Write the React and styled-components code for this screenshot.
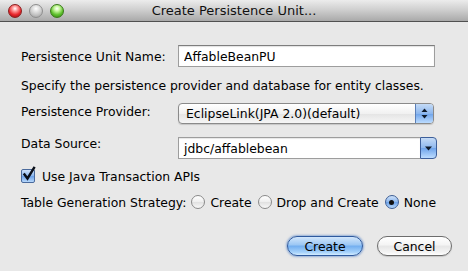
import React, { useState } from 'react'
import styled, { createGlobalStyle } from 'styled-components'

const GlobalStyle = createGlobalStyle`
    html, body {
        margin: 0;
        padding: 0;
        background: #e8e8e8;
    }
    body {
        font-family: "DejaVu Sans", "Liberation Sans", sans-serif;
        font-size: 12.4px;
        color: #000;
    }
`

const Window = styled.div`
    width: 468px;
    height: 271px;
    background: #e8e8e8;
    display: flex;
    flex-direction: column;
    overflow: hidden;
`

const TitleBar = styled.div`
    height: 21px;
    flex-shrink: 0;
    display: flex;
    align-items: center;
    position: relative;
    background: linear-gradient(#ececec, #d0d0d0 45%, #a9a9a9);
    border-bottom: 1px solid #515151;
`

const Lights = styled.div`
    display: flex;
    gap: 7px;
    padding-left: 8px;
`

const Light = styled.span`
    width: 14px;
    height: 14px;
    border-radius: 50%;
    box-sizing: border-box;
    border: 1px solid ${p => p.$edge};
    background: radial-gradient(circle at 50% 30%, #fff 0, ${p => p.$light} 25%, ${p => p.$color} 60%, ${p => p.$dark} 100%);
`

const Title = styled.div`
    position: absolute;
    left: 0;
    right: 0;
    text-align: center;
    font-size: 13px;
    color: #111;
    pointer-events: none;
`

const Body = styled.div`
    padding: 23px 0 0 21px;
    display: flex;
    flex-direction: column;
`

const FieldRow = styled.div`
    display: flex;
    align-items: center;
    height: ${p => p.$h || 22}px;
    margin-top: ${p => p.$mt || 0}px;
`

const Label = styled.div`
    width: 157px;
    flex-shrink: 0;
    position: relative;
    top: ${p => p.$shift || 0}px;
`

const TextInput = styled.input`
    box-sizing: border-box;
    width: 257px;
    height: 22px;
    border: 1px solid #9d9d9d;
    border-top-color: #7d7d7d;
    background: #fff;
    font: inherit;
    padding: 0 0 0 5px;
    outline: none;
    box-shadow: inset 0 1px 1px rgba(0,0,0,0.12);
`

const Note = styled.div`
    margin-top: 11px;
    height: 16px;
    line-height: 16px;
`

const PopUp = styled.div`
    box-sizing: border-box;
    width: 256px;
    height: 21px;
    display: flex;
    align-items: stretch;
    border: 1px solid #8a8a8a;
    border-radius: 4px;
    overflow: hidden;
    background: linear-gradient(#ffffff, #f1f1f1 50%, #e4e4e4 51%, #f6f6f6);
    box-shadow: 0 1px 1px rgba(0,0,0,0.15);
`

const PopText = styled.div`
    flex: 1;
    padding-left: 7px;
    display: flex;
    align-items: center;
`

const ArrowCap = styled.div`
    width: ${p => p.$w}px;
    border-left: 1px solid #5a7fb8;
    background: linear-gradient(#c5dbf6, #8db7ee 50%, #6ea3ea 51%, #bcdcff);
    display: flex;
    align-items: center;
    justify-content: center;
`

const Combo = styled.div`
    width: 259px;
    height: 22px;
    display: flex;
    align-items: stretch;
`

const ComboField = styled.div`
    flex: 1;
    box-sizing: border-box;
    border: 1px solid #9d9d9d;
    border-right: none;
    background: #fff;
    padding-left: 5px;
    display: flex;
    align-items: center;
    box-shadow: inset 0 1px 1px rgba(0,0,0,0.1);
`

const ComboButton = styled.div`
    width: 17px;
    box-sizing: border-box;
    border: 1px solid #3d5f9a;
    border-radius: 0 4px 4px 0;
    background: linear-gradient(#c5dbf6, #8db7ee 50%, #6ea3ea 51%, #bcdcff);
    display: flex;
    align-items: center;
    justify-content: center;
`

const CheckRow = styled.label`
    display: flex;
    align-items: center;
    gap: 7px;
    margin-top: 7px;
    height: 20px;
`

const CheckBox = styled.span`
    width: 14px;
    height: 14px;
    box-sizing: border-box;
    border: 1px solid #4a6a9c;
    border-radius: 2px;
    background: linear-gradient(#cfe2fa, #8ab5ec 50%, #6aa0e8 51%, #b7d8fb);
    position: relative;
`

const RadioRow = styled.div`
    display: flex;
    align-items: center;
    margin-top: 6px;
    height: 20px;
`

const RadioOption = styled.label`
    display: flex;
    align-items: center;
    gap: 5px;
    margin-left: ${p => p.$ml || 6}px;
`

const Radio = styled.span`
    width: 14px;
    height: 14px;
    box-sizing: border-box;
    border-radius: 50%;
    display: flex;
    align-items: center;
    justify-content: center;
    border: 1px solid ${p => p.$on ? '#3f5f95' : '#8a8a8a'};
    background: ${p => p.$on
        ? 'linear-gradient(#cfe2fa, #8ab5ec 50%, #6aa0e8 51%, #b7d8fb)'
        : 'linear-gradient(#ffffff, #eeeeee 50%, #e0e0e0 51%, #f8f8f8)'};

    &::after {
        content: '';
        display: ${p => p.$on ? 'block' : 'none'};
        width: 5px;
        height: 5px;
        border-radius: 50%;
        background: #111;
    }
`

const Buttons = styled.div`
    display: flex;
    justify-content: flex-end;
    gap: 14px;
    padding-right: 16px;
    margin-top: 24px;
`

const Button = styled.button`
    box-sizing: border-box;
    width: ${p => p.$w}px;
    height: 20px;
    border-radius: 10px;
    font: inherit;
    padding: 0;
    color: #000;
    border: 1px solid ${p => p.$primary ? '#2f5a9e' : '#6d6d6d'};
    background: ${p => p.$primary
        ? 'linear-gradient(#d2e6fb, #9ac6f4 45%, #72aef0 50%, #a6d2fb 85%, #d4ecff)'
        : 'linear-gradient(#ffffff, #f4f4f4 45%, #e6e6e6 50%, #f4f4f4 85%, #ffffff)'};
    box-shadow: ${p => p.$primary ? '0 0 2px 1px rgba(80,130,200,0.55)' : '0 1px 1px rgba(0,0,0,0.15)'};
`

const UpDown = () => (
    <svg width="7" height="11" viewBox="0 0 7 11">
        <path d="M3.5 0.5 L6.5 4 L0.5 4 Z" fill="#0f1a2a" />
        <path d="M3.5 10.5 L6.5 7 L0.5 7 Z" fill="#0f1a2a" />
    </svg>
)

const Down = () => (
    <svg width="7" height="5" viewBox="0 0 7 5">
        <path d="M0 0.5 L7 0.5 L3.5 4.5 Z" fill="#0f1a2a" />
    </svg>
)

const Tick = () => (
    <svg width="14" height="16" viewBox="0 0 14 16" style={{ position: 'absolute', left: 0, top: -4 }}>
        <path d="M2.5 8.5 L5.5 12.5 L12 2" stroke="#0a0f1a" strokeWidth="2.4" fill="none" strokeLinecap="square" />
    </svg>
)

const App = () => {
    const [unitName, setUnitName] = useState('AffableBeanPU')
    const [strategy, setStrategy] = useState('none')

    return (
        <Window>
            <GlobalStyle />
            <TitleBar>
                <Lights>
                    <Light $edge="#8a1d1d" $light="#ff9a9a" $color="#e8262b" $dark="#8d0a0f" />
                    <Light $edge="#8e8e8e" $light="#e6e6e6" $color="#c4c4c4" $dark="#9a9a9a" />
                    <Light $edge="#3a7a1a" $light="#c8f7a0" $color="#5fc12e" $dark="#2e7d10" />
                </Lights>
                <Title>Create Persistence Unit...</Title>
            </TitleBar>

            <Body>
                <FieldRow>
                    <Label>Persistence Unit Name:</Label>
                    <TextInput value={unitName} onChange={(e) => setUnitName(e.target.value)} />
                </FieldRow>

                <Note>Specify the persistence provider and database for entity classes.</Note>

                <FieldRow $h={21} $mt={9}>
                    <Label $shift={-2}>Persistence Provider:</Label>
                    <PopUp>
                        <PopText>EclipseLink(JPA 2.0)(default)</PopText>
                        <ArrowCap $w={17}><UpDown /></ArrowCap>
                    </PopUp>
                </FieldRow>

                <FieldRow $mt={13}>
                    <Label $shift={-5}>Data Source:</Label>
                    <Combo>
                        <ComboField>jdbc/affablebean</ComboField>
                        <ComboButton><Down /></ComboButton>
                    </Combo>
                </FieldRow>

                <CheckRow>
                    <CheckBox><Tick /></CheckBox>
                    <span>Use Java Transaction APIs</span>
                </CheckRow>

                <RadioRow>
                    <span>Table Generation Strategy:</span>
                    <RadioOption $ml={5} onClick={() => setStrategy('create')}>
                        <Radio $on={strategy === 'create'} />Create
                    </RadioOption>
                    <RadioOption onClick={() => setStrategy('drop')}>
                        <Radio $on={strategy === 'drop'} />Drop and Create
                    </RadioOption>
                    <RadioOption onClick={() => setStrategy('none')}>
                        <Radio $on={strategy === 'none'} />None
                    </RadioOption>
                </RadioRow>

                <Buttons>
                    <Button $primary $w={76}>Create</Button>
                    <Button $w={75}>Cancel</Button>
                </Buttons>
            </Body>
        </Window>
    )
}

export default App
